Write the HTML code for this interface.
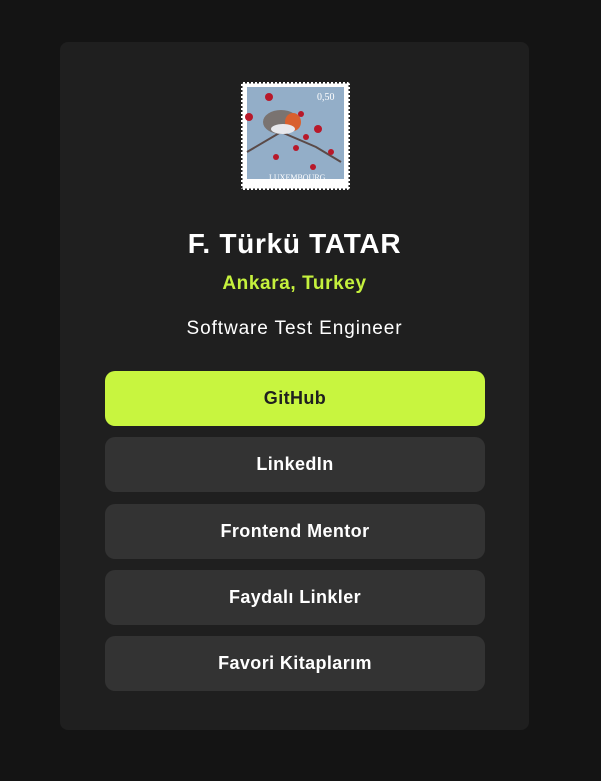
<!DOCTYPE html>
<html><head><meta charset="utf-8"><style>
body{margin:0;background:#141414;width:601px;height:781px;font-family:"Liberation Sans",sans-serif;position:relative;overflow:hidden}
.card{position:absolute;left:60px;top:42px;width:469px;height:688px;background:#1f1f1f;border-radius:8px}
.t{position:absolute;left:0;width:100%;text-align:center}
.btn{position:absolute;left:45px;width:380px;height:55px;border-radius:10px;background:#333;color:#fff;font-weight:bold;font-size:18px;letter-spacing:0.4px;line-height:55px;text-align:center}
</style></head><body>
<div class="card">
<svg style="position:absolute;left:181px;top:40px" width="109" height="108" viewBox="0 0 109 108">
<rect width="109" height="108" fill="#fff"/>
<rect x="0" y="0" width="109" height="108" fill="none" stroke="#1f1f1f" stroke-width="3" stroke-dasharray="2 2"/>
<rect x="6" y="5" width="97" height="92" fill="#93aec8"/>
<path d="M6 70 L40 50 L75 65 L100 80" stroke="#5a4a48" stroke-width="2" fill="none"/>
<ellipse cx="40" cy="40" rx="18" ry="12" fill="#7a7370"/>
<ellipse cx="52" cy="40" rx="8" ry="9" fill="#d9602e"/>
<ellipse cx="42" cy="47" rx="12" ry="5" fill="#e8e8ec"/>
<g fill="#b8182a"><circle cx="28" cy="15" r="4"/><circle cx="8" cy="35" r="4"/><circle cx="77" cy="47" r="4"/><circle cx="65" cy="55" r="3"/><circle cx="55" cy="66" r="3"/><circle cx="35" cy="75" r="3"/><circle cx="72" cy="85" r="3"/><circle cx="90" cy="70" r="3"/><circle cx="60" cy="32" r="3"/></g>
<text x="76" y="18" fill="#fff" font-size="10" font-family="Liberation Serif">0,50</text>
<text x="28" y="98" fill="#fff" font-size="8" font-family="Liberation Serif">LUXEMBOURG</text>
</svg>
<div class="t" style="top:186px;font-size:28px;font-weight:bold;color:#fff;letter-spacing:0.7px">F. Türkü TATAR</div>
<div class="t" style="top:231px;font-size:19px;font-weight:bold;color:#c5f13d;letter-spacing:0.6px">Ankara, Turkey</div>
<div class="t" style="top:276px;font-size:19px;color:#fff;letter-spacing:0.9px">Software Test Engineer</div>
<div class="btn" style="top:329px;background:#c8f53f;color:#1f1f1f">GitHub</div>
<div class="btn" style="top:395px">LinkedIn</div>
<div class="btn" style="top:462px">Frontend Mentor</div>
<div class="btn" style="top:528px">Faydalı Linkler</div>
<div class="btn" style="top:594px">Favori Kitaplarım</div>
</div>
</body></html>
